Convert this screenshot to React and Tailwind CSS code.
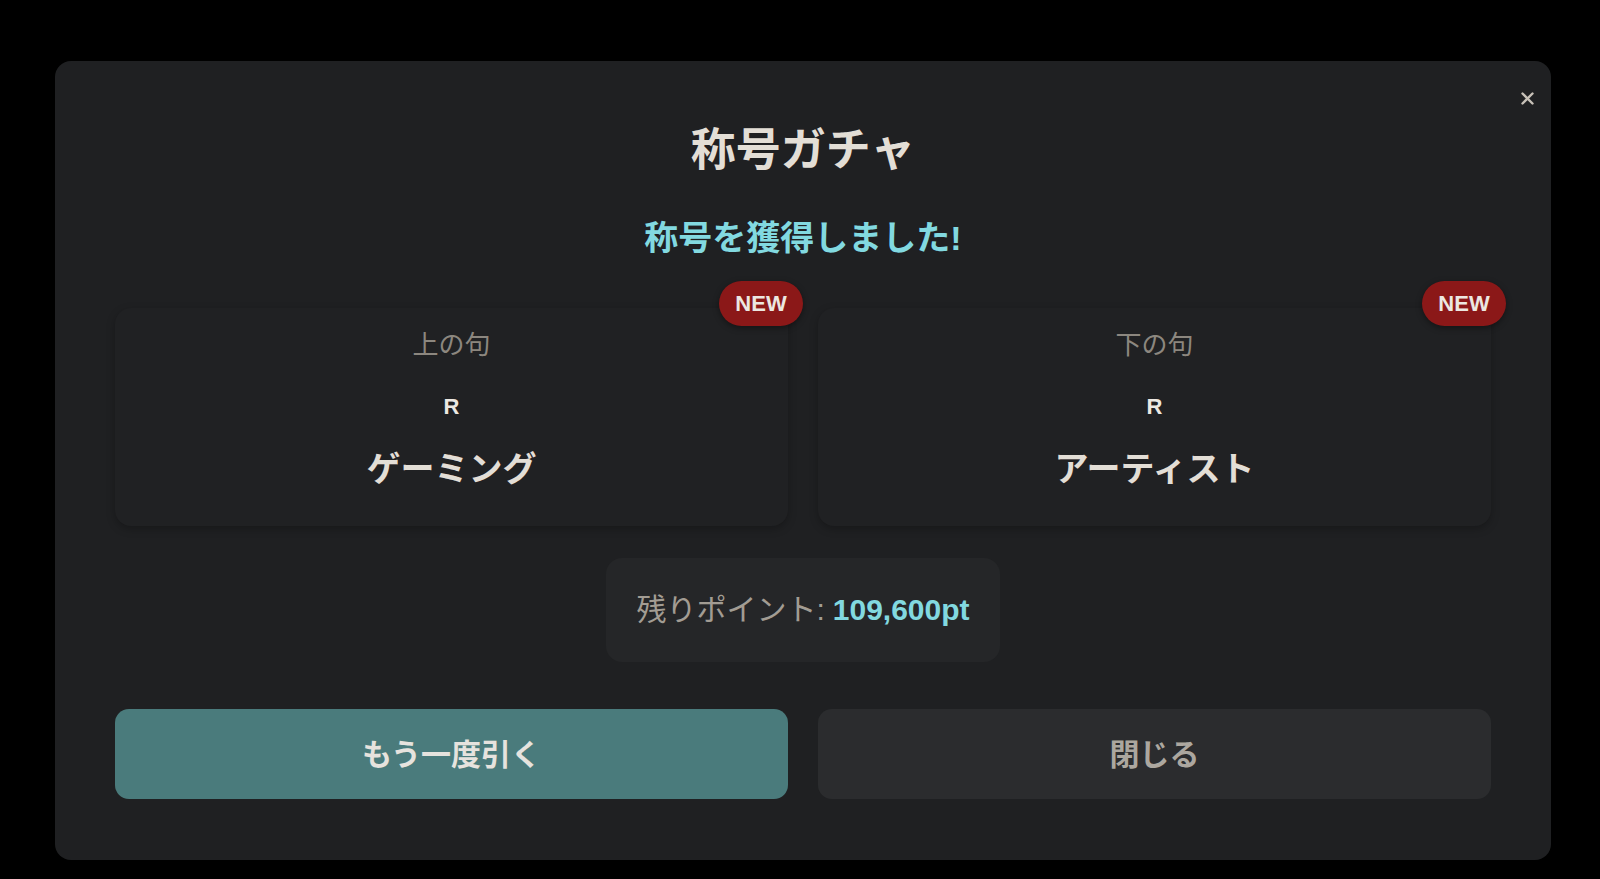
import React from "react";

const font = { fontFamily: '"Liberation Sans", "Noto Sans CJK JP", sans-serif' };

function Card({ label, name }) {
  return (
    <div className="relative flex flex-col items-center rounded-2xl bg-[#202123] pt-[21px] h-[218px] shadow-[0_3px_8px_rgba(0,0,0,0.25)]">
      <div className="absolute -top-[27px] -right-[15px] flex h-[45px] w-[84px] items-center justify-center rounded-full bg-[#8b1818] text-[22px] font-bold text-[#ece7e1] shadow-[0_2px_6px_rgba(0,0,0,0.4)]">
        NEW
      </div>
      <div className="text-[26px] leading-[32px] text-[#8c877f]">{label}</div>
      <div className="mt-[32px] text-[22px] leading-[28px] font-bold text-[#ece8e2]">R</div>
      <div className="mt-[26px] text-[34px] leading-[44px] font-bold text-[#e3ded6]">{name}</div>
    </div>
  );
}

export default function App() {
  return (
    <div className="min-h-[879px] w-full bg-black pt-[61px]" style={font}>
      <div className="relative ml-[55px] w-[1496px] h-[799px] rounded-2xl bg-[#1f2022] px-[60px] pt-[60px]">
        <button className="absolute right-[17px] top-[30px] flex h-[14px] w-[14px] items-center justify-center text-[#c7c1b8]">
          <svg width="13" height="13" viewBox="0 0 13 13" fill="none" stroke="currentColor" strokeWidth="2.4" strokeLinecap="round">
            <line x1="1.5" y1="1.5" x2="11.5" y2="11.5" />
            <line x1="11.5" y1="1.5" x2="1.5" y2="11.5" />
          </svg>
        </button>
        <h1 className="text-center text-[45px] leading-[60px] font-bold text-[#e3ded6]">称号ガチャ</h1>
        <p className="mt-[35px] text-center text-[34px] leading-[44px] font-bold text-[#82d9e0]">称号を獲得しました!</p>
        <div className="mt-[48px] grid grid-cols-2 gap-[30px]">
          <Card label="上の句" name="ゲーミング" />
          <Card label="下の句" name="アーティスト" />
        </div>
        <div className="mt-[32px] flex justify-center">
          <div className="flex h-[104px] items-center rounded-2xl bg-[#252628] px-[30px] text-[30px] leading-[36px]">
            <span className="text-[#a29c93]">残りポイント: </span>
            <span className="ml-[8px] font-bold text-[#82d9e0]">109,600pt</span>
          </div>
        </div>
        <div className="mt-[47px] grid grid-cols-2 gap-[30px]">
          <button className="flex h-[90px] items-center justify-center rounded-[14px] bg-[#4a7b7c] text-[30px] font-bold text-[#e6e3de]">
            もう一度引く
          </button>
          <button className="flex h-[90px] items-center justify-center rounded-[14px] bg-[#2b2c2e] text-[30px] font-bold text-[#aca79f]">
            閉じる
          </button>
        </div>
      </div>
    </div>
  );
}
